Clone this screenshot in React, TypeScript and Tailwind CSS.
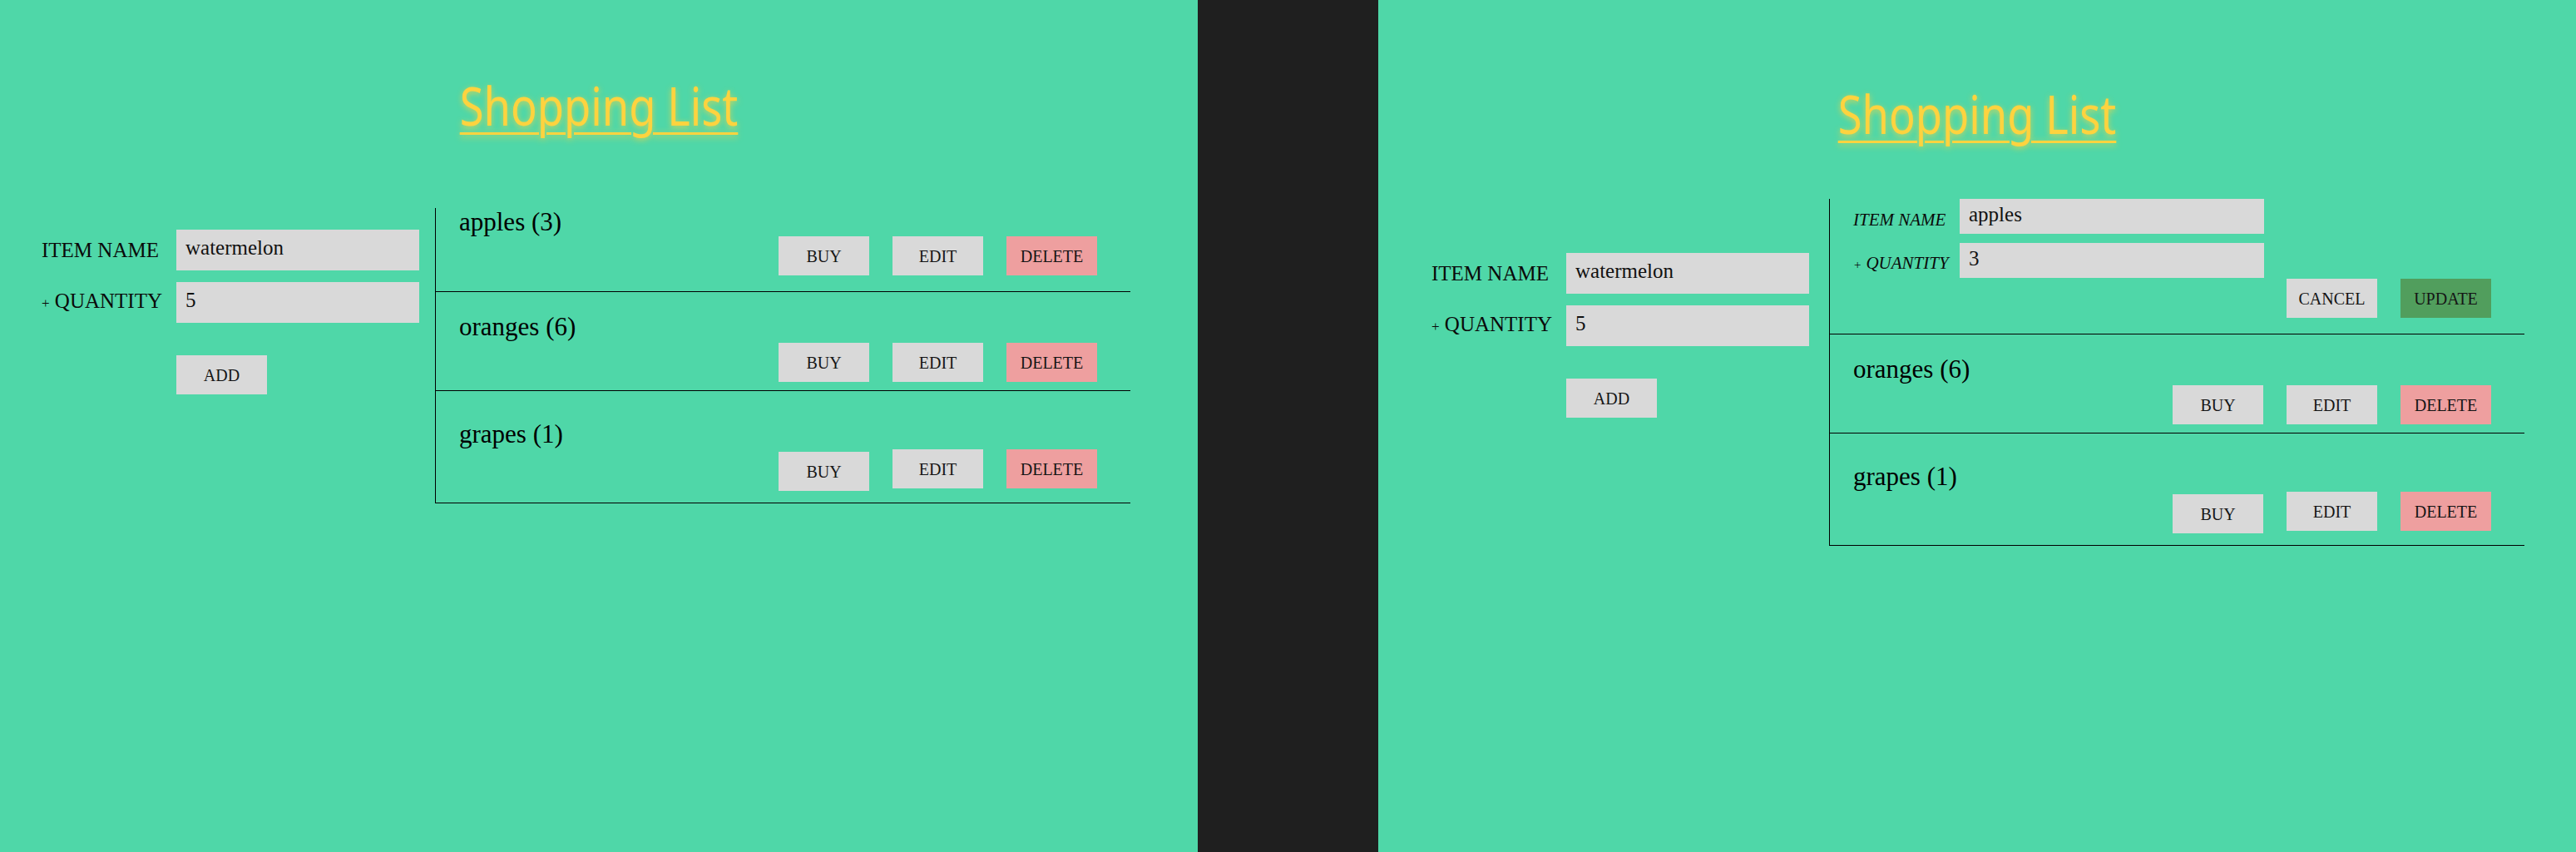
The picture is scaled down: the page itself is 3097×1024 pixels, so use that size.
import React from 'react';

type Item = { name: string; qty: number };

const items: Item[] = [
  { name: 'apples', qty: 3 },
  { name: 'oranges', qty: 6 },
  { name: 'grapes', qty: 1 },
];

const serif = "font-['Liberation_Serif','Times_New_Roman',serif]";
const btn = `w-[109px] h-[47px] text-[20px] leading-none text-[#151515] ${serif}`;

// per-row spacing taken from the screenshot
const rowPad = [
  { pad: 'pt-0 pb-[19px]', btns: 'mt-[1px]', buy: '' },
  { pad: 'pt-[25px] pb-[10px]', btns: 'mt-[3px]', buy: '' },
  { pad: 'pt-[35px] pb-[14px]', btns: 'mt-[2px]', buy: 'mt-[3px]' },
];

const Title = ({ top }: { top: string }) => (
  <h1 className={`${top} flex justify-center`}>
    <span className="inline-block origin-center scale-x-[0.82] font-['Noto_Sans',sans-serif] text-[64px] leading-[64px] text-[#fdd33f] underline decoration-[3px] underline-offset-[8px] [text-shadow:0_2px_8px_rgba(253,211,63,0.75)]">
      Shopping List
    </span>
  </h1>
);

const AddForm = ({ className }: { className: string }) => (
  <div className={`${className} flex flex-col ${serif}`}>
    <div className="flex items-center">
      <label className="w-[162px] text-[25px] leading-[30px] text-[#0a0a0a]">ITEM NAME</label>
      <input
        readOnly
        value="watermelon"
        className="w-[292px] h-[49px] bg-[#d9d9d9] pl-[11px] pb-[6px] text-[25px] text-[#111] outline-none"
      />
    </div>
    <div className="flex items-center mt-[14px]">
      <label className="w-[162px] text-[25px] leading-[30px] text-[#0a0a0a]">
        <span className="text-[17px]">+</span> QUANTITY
      </label>
      <input
        readOnly
        value="5"
        className="w-[292px] h-[49px] bg-[#d9d9d9] pl-[11px] pb-[6px] text-[25px] text-[#111] outline-none"
      />
    </div>
    <button className={`${btn} ml-[162px] mt-[39px] bg-[#d9d9d9]`}>ADD</button>
  </div>
);

const ItemRow = ({ item, i }: { item: Item; i: number }) => {
  const s = rowPad[i];
  return (
    <div className={`border-b border-black pl-[28px] ${s.pad} ${serif}`}>
      <div className="text-[31px] leading-[33px] text-black">
        {item.name} ({item.qty})
      </div>
      <div className={`${s.btns} flex items-start justify-end gap-[28px] pr-[40px]`}>
        <button className={`${btn} ${s.buy} bg-[#d9d9d9]`}>BUY</button>
        <button className={`${btn} bg-[#d9d9d9]`}>EDIT</button>
        <button className={`${btn} bg-[#ee9f9f]`}>DELETE</button>
      </div>
    </div>
  );
};

const EditRow = ({ item }: { item: Item }) => (
  <div className={`border-b border-black pl-[28px] pb-[19px] ${serif}`}>
    <div className="flex items-center">
      <label className="w-[128px] pt-[8px] text-[21px] italic leading-[24px] text-[#0a0a0a]">ITEM NAME</label>
      <input
        readOnly
        value={item.name}
        className="w-[366px] h-[42px] bg-[#d9d9d9] pl-[11px] pb-[5px] text-[25px] text-[#111] outline-none"
      />
    </div>
    <div className="flex items-center mt-[11px]">
      <label className="w-[128px] pt-[8px] text-[21px] italic leading-[24px] text-[#0a0a0a]">
        <span className="text-[15px]">+</span> QUANTITY
      </label>
      <input
        readOnly
        value={String(item.qty)}
        className="w-[366px] h-[42px] bg-[#d9d9d9] pl-[11px] pb-[5px] text-[25px] text-[#111] outline-none"
      />
    </div>
    <div className="mt-[1px] flex justify-end gap-[28px] pr-[40px]">
      <button className={`${btn} bg-[#d9d9d9]`}>CANCEL</button>
      <button className={`${btn} bg-[#519e5d]`}>UPDATE</button>
    </div>
  </div>
);

const Panel = ({ editing }: { editing: boolean }) => (
  <div className="h-full bg-[#4fd7a8] flex flex-col">
    <Title top={editing ? 'mt-[105px]' : 'mt-[95px]'} />
    <div className={`flex items-start ${editing ? 'mt-[70px]' : 'mt-[91px]'}`}>
      <AddForm className={editing ? 'pl-[64px] mt-[65px]' : 'pl-[50px] mt-[26px]'} />
      <div className={`w-[836px] border-l border-black ${editing ? 'ml-[24px]' : 'ml-[19px]'}`}>
        {items.map((item, i) =>
          editing && i === 0 ? (
            <EditRow key={item.name} item={item} />
          ) : (
            <ItemRow key={item.name} item={item} i={i} />
          )
        )}
      </div>
    </div>
  </div>
);

const App = () => {
  return (
    <div className="flex h-screen w-full">
      <div className="w-[1440px] shrink-0">
        <Panel editing={false} />
      </div>
      <div className="w-[217px] shrink-0 bg-[#1f1f1f]" />
      <div className="flex-1">
        <Panel editing={true} />
      </div>
    </div>
  );
};

export default App;
